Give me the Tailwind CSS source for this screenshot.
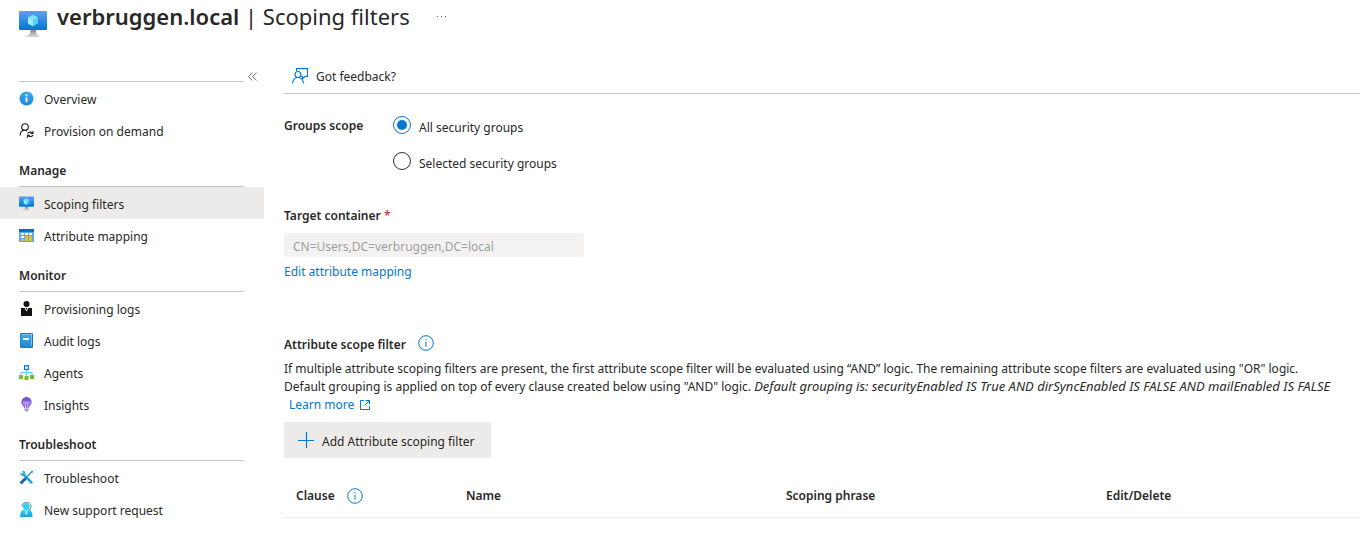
<!DOCTYPE html>
<html lang="en">
<head>
<meta charset="utf-8">
<meta name="viewport" content="width=device-width, initial-scale=1">
<title>verbruggen.local | Scoping filters</title>
<script src="https://cdn.jsdelivr.net/npm/@tailwindcss/browser@4"></script>
</head>
<body class="bg-white font-['Noto_Sans',sans-serif] text-[12px] leading-[18px] text-[#292827]">
<svg class="absolute size-0" aria-hidden="true">
  <defs>
    <linearGradient id="screen" x1="0" y1="0" x2="0" y2="1"><stop offset="0" stop-color="#5ea0ef"/><stop offset="1" stop-color="#0078d4"/></linearGradient>
    <linearGradient id="stand" x1="0" y1="0" x2="0" y2="1"><stop offset="0" stop-color="#8a8a8a"/><stop offset="1" stop-color="#dcdcdc"/></linearGradient>
    <linearGradient id="sky" x1="0" y1="0" x2="0" y2="1"><stop offset="0" stop-color="#3fa9f0"/><stop offset="1" stop-color="#1a86d8"/></linearGradient>
    <linearGradient id="cyan" x1="0" y1="0" x2="0" y2="1"><stop offset="0" stop-color="#32d4f5"/><stop offset="1" stop-color="#1a9fd0"/></linearGradient>
    <linearGradient id="bulb" x1="0" y1="0" x2="0" y2="1"><stop offset="0" stop-color="#6f4bd0"/><stop offset="1" stop-color="#a67af4"/></linearGradient>
    <symbol id="monitor" viewBox="0 0 28 28">
      <path d="M11.500 20h5.500c0 3.500.7 5.500 3.500 6v1H7v-1c3.500-.5 4.500-2.500 4.500-6z" fill="url(#stand)"/>
      <rect y="1" width="28" height="19" rx=".8" fill="url(#screen)"/>
      <path d="M14 4.700l5 2.900v5.800l-5 2.900-5-2.900V7.600z" fill="#50d0f4"/>
      <path d="M14 4.700l5 2.900-5 2.900-5-2.900z" fill="#7fe0fa"/>
      <path d="M9 7.600l5 2.900v5.800l-5-2.900z" fill="#a4ebfb"/>
    </symbol>
    <symbol id="info" viewBox="0 0 16 16">
      <circle cx="8" cy="8" r="7.300" fill="none" stroke="#0078d4" stroke-width="1"/>
      <path d="M8 6.700v5M8 4v1.300" stroke="#0078d4" stroke-width="1" fill="none"/>
    </symbol>
  </defs>
</svg>

<header class="flex h-12 items-start pl-[19px]">
  <svg class="mt-[10px] size-7 shrink-0"><use href="#monitor"/></svg>
  <h1 class="ml-[10px] text-[22px] leading-8"><span class="font-semibold">verbruggen.local</span> | Scoping filters</h1>
  <button type="button" aria-label="More" class="mt-2 ml-6 flex h-4 w-4 items-center justify-center gap-[3px]"><i class="size-px bg-[#605e5c]"></i><i class="size-px bg-[#605e5c]"></i><i class="size-px bg-[#605e5c]"></i></button>
</header>

<div class="flex">
  <nav aria-label="Sections" class="w-[264px] shrink-0 pt-[19px]">
    <div class="flex h-[15px] items-end">
      <div class="ml-[19px] w-[225px] border-b border-[#c8c6c4]"></div>
      <button type="button" aria-label="Collapse menu" class="mb-[1px] ml-1"><svg class="h-[9px] w-[9px]" viewBox="0 0 9 9" fill="none" stroke="#605e5c" stroke-width=".9"><path d="M4.300.5l-3.800 4 3.800 4M8.500.5l-3.800 4 3.800 4"/></svg></button>
    </div>
    <ul>
      <li><a href="#" class="flex h-8 items-center gap-[10px] pt-1 pl-[19px]">
        <svg class="mb-[3px] size-[15px]" viewBox="0 0 15 15"><circle cx="7.500" cy="7.500" r="7" fill="url(#sky)"/><path d="M6.600 6.300h1.800v4.900H6.600z" fill="#fff"/><circle cx="7.500" cy="4.300" r="1.100" fill="#fff"/></svg>Overview</a></li>
      <li><a href="#" class="flex h-8 items-center gap-[10px] pt-1 pl-[19px]">
        <svg class="mb-[3px] size-[15px]" viewBox="0 0 15 15" fill="none" stroke="#1b1a19" stroke-width="1.100"><circle cx="6" cy="4" r="3.300"/><path d="M1 12.500c.2-3 2-5.200 4.500-5.200 1 0 1.800.2 2.500.7M8.600 10.600c.7-1.700 3.500-2.200 4.800-.4M14 8v2.500h-2.500M14 12c-.6 1.700-3.600 2.300-4.900.5M8.500 14.700v-2.500H11"/></svg>Provision on demand</a></li>
    </ul>
    <h2 class="ml-[19px] flex h-[41px] w-[225px] items-center border-b border-[#c8c6c4] pt-[10px] font-semibold">Manage</h2>
    <ul>
      <li><a href="#" aria-current="page" class="flex h-8 items-center gap-[10px] bg-[#edebe9] pt-1 pl-[19px]">
        <svg class="mb-[3px] size-[15px]"><use href="#monitor"/></svg>Scoping filters</a></li>
      <li><a href="#" class="flex h-8 items-center gap-[10px] pt-1 pl-[19px]">
        <svg class="mb-[3px] size-[15px]" viewBox="0 0 15 15"><rect y="1" width="15" height="13" rx=".6" fill="#5ea9ee"/><path d="M0 1h15v3H0z" fill="#0072cd"/><path d="M2 5h3v2H2zM6 5h3v2H6zM10 5h3v2h-3zM2 8h3v2H2z" fill="#fff"/><path d="M2 11h3v2H2zM6 8h3v5H6zM10 8h3v5h-3z" fill="#d9c52e"/></svg>Attribute mapping</a></li>
    </ul>
    <h2 class="ml-[19px] flex h-[41px] w-[225px] items-center border-b border-[#c8c6c4] pt-[10px] font-semibold">Monitor</h2>
    <ul>
      <li><a href="#" class="flex h-8 items-center gap-[10px] pt-1 pl-[19px]">
        <svg class="mb-[3px] size-[15px]" viewBox="0 0 15 15" fill="#111"><circle cx="7.500" cy="3" r="3"/><path d="M2 7h3.500l2 3.500 2-3.500H13v8H2z"/><path d="M6.500 7h2l-1 2z"/></svg>Provisioning logs</a></li>
      <li><a href="#" class="flex h-8 items-center gap-[10px] pt-1 pl-[19px]">
        <svg class="mb-[3px] size-[15px]" viewBox="0 0 15 15"><rect x="1" width="13" height="15" rx="1.200" fill="#1677bf"/><path d="M3 1h10v12H3z" fill="#c8e6fb"/><rect x="1.500" y="1.500" width="11" height="13" rx=".8" fill="url(#sky)"/><path d="M4 5h6v2H4z" fill="#fff"/></svg>Audit logs</a></li>
      <li><a href="#" class="flex h-8 items-center gap-[10px] pt-1 pl-[19px]">
        <svg class="mb-[3px] size-[15px]" viewBox="0 0 15 15" fill="none"><path d="M7.500 4.500V11M2 11V7.500h11V11" stroke="#50d5f5"/><rect x="5.600" y=".7" width="3.800" height="3.800" fill="#fff" stroke="#0078d4" stroke-width="1.300"/><path d="M0 10h4v4H0zM5.500 11h4v4h-4zM11 10h4v4h-4z" fill="#76bc2d"/></svg>Agents</a></li>
      <li><a href="#" class="flex h-8 items-center gap-[10px] pt-1 pl-[19px]">
        <svg class="mb-[3px] size-[15px]" viewBox="0 0 15 15" fill="none"><path d="M7.500 0a5 5 0 0 1 5.200 5c0 3-2.700 4-2.900 6.500H5.200C5 9 2.300 8 2.300 5a5 5 0 0 1 5.200-5z" fill="url(#bulb)"/><path d="M6.500 11V5.500M8.500 11V5.500M6.500 5.500a1 1 0 1 1-1-1c.7 0 1 .5 1 1h2c0-.5.3-1 1-1a1 1 0 1 1-1 1" stroke="#e2d2ff" stroke-width=".6"/><path d="M5.500 12h4v1l-1 1.500h-2l-1-1.500z" fill="#a0a0a0"/></svg>Insights</a></li>
    </ul>
    <h2 class="ml-[19px] flex h-[41px] w-[225px] items-center border-b border-[#c8c6c4] pt-[10px] font-semibold">Troubleshoot</h2>
    <ul>
      <li><a href="#" class="flex h-8 items-center gap-[10px] pt-1 pl-[19px]">
        <svg class="mb-[3px] size-[15px]" viewBox="0 0 15 15" fill="none"><path d="M4 4l8.500 8.500" stroke="#22a5d4" stroke-width="2.500" stroke-linecap="round"/><path d="M1.200 2.200l2 2 1.400-1.300L2.900.9C5.500.3 7.300 2.500 6.300 5 4.800 7.200.8 6 1.200 2.200z" fill="#2db6e4"/><path d="M13 1.500L6.500 8.500" stroke="#2590c8" stroke-width="1.200"/><path d="M12.200.8l1.800.1-.1 1.600-1.300.5z" fill="#2590c8"/><path d="M6 9l-3.500 3.500" stroke="#1467ad" stroke-width="3" stroke-linecap="round"/></svg>Troubleshoot</a></li>
      <li><a href="#" class="flex h-8 items-center gap-[10px] pt-1 pl-[19px]">
        <svg class="mb-[3px] size-[15px]" viewBox="0 0 15 15"><path d="M3 4.500C3 1 5.200.5 7.500.5S12 1 12 4.500c0 2-1 3-2.500 3.500" fill="none" stroke="#777"/><circle cx="7.300" cy="4.600" r="3.500" fill="#32d0f0"/><path d="M1.200 15c0-4 .7-6.500 2.800-7h6.800c2 .5 2.700 3 2.700 7z" fill="url(#cyan)"/><path d="M6.300 8.500h2.200l-.2 3-.9 1.500-.9-1.500z" fill="#c9f4fd"/></svg>New support request</a></li>
    </ul>
  </nav>

  <main class="min-w-0 flex-1 pl-5">
    <div class="flex h-[46px] items-center border-b border-[#c8c6c4] pt-[11px] pl-2">
      <button type="button" class="flex items-center gap-2"><svg class="size-4" viewBox="0 0 16 16" fill="none" stroke="#0078d4" stroke-width="1.100"><circle cx="6" cy="6.500" r="3"/><path d="M.6 15.500c.3-3.500 2.400-6 5.400-6s5.100 2.500 5.400 6M4.500 3V.6h11v7.800h-2.300l-2.700 2.300V8.400H9.500"/></svg><span class="pt-0.5">Got feedback?</span></button>
    </div>

    <fieldset aria-labelledby="scope-label" class="flex">
      <span id="scope-label" class="mt-[23px] w-[109px] font-semibold">Groups scope</span>
      <div class="mt-[22px] flex flex-col gap-[18px]">
        <label class="flex h-[18px] items-center gap-2"><input type="radio" name="scope" checked class="size-[18px] appearance-none rounded-full border border-[#323130] checked:border-[#0078d4] checked:bg-[#0078d4] checked:bg-clip-content checked:p-[3px]"><span class="pt-1.5">All security groups</span></label>
        <label class="flex h-[18px] items-center gap-2"><input type="radio" name="scope" class="size-[18px] appearance-none rounded-full border border-[#323130] checked:border-[#0078d4] checked:bg-[#0078d4] checked:bg-clip-content checked:p-[3px]"><span class="pt-1.5">Selected security groups</span></label>
      </div>
    </fieldset>

    <label for="container" class="mt-[37px] block font-semibold">Target container <span class="font-normal text-[#a4262c]">*</span></label>
    <input id="container" type="text" disabled value="CN=Users,DC=verbruggen,DC=local" class="mt-2 block h-6 w-[300px] rounded-xs bg-[#f3f2f1] px-[9px] pt-0.5 text-[#a19f9d]">
    <a href="#" class="mt-[6px] inline-block text-[#0078d4]">Edit attribute mapping</a>

    <div class="mt-[52px] flex items-center gap-3">
      <h2 class="pt-[3px] font-semibold">Attribute scope filter</h2>
      <button type="button" aria-label="About attribute scope filter" class="mb-0.5"><svg class="size-4"><use href="#info"/></svg></button>
    </div>
    <p class="mt-[6px]">If multiple attribute scoping filters are present, the first attribute scope filter will be evaluated using “AND” logic. The remaining attribute scope filters are evaluated using "OR" logic.<br>Default grouping is applied on top of every clause created below using "AND" logic. <em class="text-[13px] leading-4">Default grouping is: securityEnabled IS True AND dirSyncEnabled IS FALSE AND mailEnabled IS FALSE</em></p>
    <a href="#" class="ml-[5px] flex w-fit items-center gap-[6px] text-[#0078d4]">Learn more
      <svg class="size-[10px]" viewBox="0 0 10 10" fill="none" stroke="#0078d4"><path d="M4 .5H.5v9h9V6M5.500.5h4v4M9.500.5L4.500 5.500"/></svg></a>

    <button type="button" class="mt-2 flex h-9 items-center gap-2 bg-[#edebe9] pr-4 pl-[14px]"><svg class="size-4" viewBox="0 0 16 16" fill="none" stroke="#0078d4" stroke-width="1.200"><path d="M8.500 0v16M0 8.500h16"/></svg><span class="pt-1">Add Attribute scoping filter</span></button>

    <table class="mt-[17px] w-full table-fixed border-b border-[#edebe9] text-left">
      <thead>
        <tr class="h-[42px]">
          <th scope="col" class="w-[170px] pl-3 font-semibold"><span class="flex items-center gap-3">Clause <button type="button" aria-label="About clauses"><svg class="size-4"><use href="#info"/></svg></button></span></th>
          <th scope="col" class="w-[320px] pl-3 font-semibold">Name</th>
          <th scope="col" class="w-[320px] pl-3 font-semibold">Scoping phrase</th>
          <th scope="col" class="pl-3 font-semibold">Edit/Delete</th>
        </tr>
      </thead>
    </table>
  </main>
</div>
</body>
</html>
